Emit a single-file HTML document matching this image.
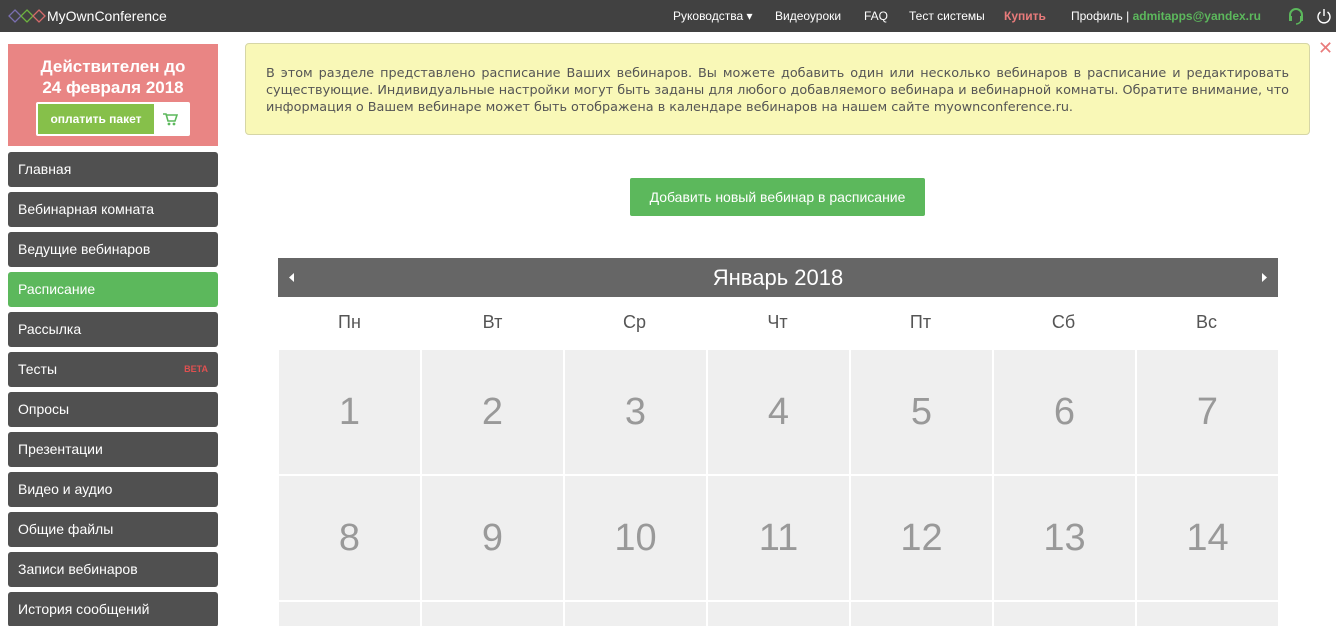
<!DOCTYPE html>
<html style="width:1336px;height:626px;overflow:hidden"><head><meta charset="utf-8"><style>
*{box-sizing:border-box;margin:0;padding:0}
body{width:1336px;height:626px;overflow:hidden;background:#fff;font-family:"Liberation Sans",sans-serif;position:relative}
.top{position:absolute;left:0;top:0;width:1336px;height:32px;background:#414141;color:#fff}
.logo{position:absolute;left:47px;top:8px;font-size:14px;color:#fff}
.nav{position:absolute;top:9px;font-size:12px;color:#fff;white-space:nowrap}
.pink{position:absolute;left:8px;top:44px;width:210px;height:102px;background:#e98584;text-align:center;color:#fff;font-family:"Liberation Sans",sans-serif;font-weight:bold;font-size:17px;line-height:21px;padding-top:12px}
.paybox{position:absolute;left:28px;top:58px;width:154px;height:34px;background:#fff;border-radius:2px}
.paybtn{position:absolute;left:2px;top:2px;width:116px;height:30px;background:#86c04a;color:#fff;font-family:"Liberation Sans",sans-serif;font-size:12px;line-height:30px}
.m{position:absolute;left:8px;width:210px;height:35px;background:#505050;border-radius:3px;color:#fff;font-size:14px;line-height:35px;padding-left:10px}
.m.act{background:#5cb85c}
.note{position:absolute;left:245px;top:43px;width:1065px;height:92px;background:#f9f8b7;border:1px solid #d6d6a6;border-radius:4px;padding:21px 20px 0 20px;font-family:"DejaVu Sans",sans-serif;font-size:12.8px;line-height:17px;color:#555;text-align:justify}
.btn{position:absolute;left:630px;top:178px;width:295px;height:38px;background:#5cb85c;color:#fff;font-size:14px;text-align:center;line-height:38px;border-radius:2px}
.calh{position:absolute;left:278px;top:258px;width:1000px;height:39px;background:#666;color:#fff;text-align:center;font-size:22px;line-height:39px}
.dn{position:absolute;top:312px;width:143px;text-align:center;font-size:18px;color:#555}
.c{position:absolute;width:141px;height:124px;background:#efefef;color:#999;font-size:38px;text-align:center;line-height:124px}
</style></head><body>
<div class="top">
<svg style="position:absolute;left:8px;top:8px" width="38" height="16"><g fill="none" stroke-width="1.3"><path d="M7 2 L13 8 L7 14 L1 8Z" stroke="#7a6fb0"/><path d="M19 2 L25 8 L19 14 L13 8Z" stroke="#6db33f"/><path d="M31 2 L37 8 L31 14 L25 8Z" stroke="#d46a6a"/></g></svg>
<div class="logo">MyOwnConference</div>
<div class="nav" style="left:673px">Руководства ▾</div>
<div class="nav" style="left:775px">Видеоуроки</div>
<div class="nav" style="left:864px">FAQ</div>
<div class="nav" style="left:909px">Тест системы</div>
<div class="nav" style="left:1004px;color:#e97b7b;font-weight:bold">Купить</div>
<div class="nav" style="left:1071px">Профиль | <b style="color:#5cb85c">admitapps@yandex.ru</b></div>
<svg style="position:absolute;left:1287px;top:7px" width="18" height="18"><path d="M3 11 V8 a6 6 0 0 1 12 0 V11" fill="none" stroke="#5cb85c" stroke-width="2"/><rect x="2" y="9" width="3" height="5" fill="#5cb85c"/><rect x="13" y="9" width="3" height="5" fill="#5cb85c"/><path d="M14 14 Q12 17 9 17" fill="none" stroke="#5cb85c" stroke-width="1.5"/></svg>
<svg style="position:absolute;left:1316px;top:7px" width="16" height="18"><path d="M4.5 5 A6 6 0 1 0 11.5 5" fill="none" stroke="#fff" stroke-width="1.4"/><path d="M8 2 V9" stroke="#fff" stroke-width="1.4"/></svg>
</div>
<div class="pink">Действителен до<br>24 февраля 2018
<div class="paybox"><div class="paybtn"><b>оплатить пакет</b></div>
<svg style="position:absolute;left:126px;top:10px" width="16" height="14"><path d="M1 2 H4 L6 9 H13 L15 3 H5" fill="none" stroke="#5cb85c" stroke-width="1.6"/><circle cx="7" cy="12" r="1.4" fill="#5cb85c"/><circle cx="12" cy="12" r="1.4" fill="#5cb85c"/></svg></div></div>
<div class="m" style="top:152px">Главная</div>
<div class="m" style="top:192px">Вебинарная комната</div>
<div class="m" style="top:232px">Ведущие вебинаров</div>
<div class="m act" style="top:272px">Расписание</div>
<div class="m" style="top:312px">Рассылка</div>
<div class="m" style="top:352px">Тесты<span style="position:absolute;right:10px;color:#e05050;font-size:9px;font-weight:bold">BETA</span></div>
<div class="m" style="top:392px">Опросы</div>
<div class="m" style="top:432px">Презентации</div>
<div class="m" style="top:472px">Видео и аудио</div>
<div class="m" style="top:512px">Общие файлы</div>
<div class="m" style="top:552px">Записи вебинаров</div>
<div class="m" style="top:592px">История сообщений</div>
<div class="note">В этом разделе представлено расписание Ваших вебинаров. Вы можете добавить один или несколько вебинаров в расписание и редактировать существующие. Индивидуальные настройки могут быть заданы для любого добавляемого вебинара и вебинарной комнаты. Обратите внимание, что информация о Вашем вебинаре может быть отображена в календаре вебинаров на нашем сайте myownconference.ru.</div>
<div style="position:absolute;left:1318px;top:38px;color:#e97b7b;font-size:18px">✕</div>
<div class="btn">Добавить новый вебинар в расписание</div>
<div class="calh">Январь 2018
<svg style="position:absolute;left:10px;top:14px" width="8" height="11"><path d="M6 1 L1 5.5 L6 10Z" fill="#fff"/></svg>
<svg style="position:absolute;right:10px;top:14px" width="8" height="11"><path d="M2 1 L7 5.5 L2 10Z" fill="#fff"/></svg></div>
<div class="dn" style="left:278px">Пн</div><div class="dn" style="left:421px">Вт</div><div class="dn" style="left:563px">Ср</div><div class="dn" style="left:706px">Чт</div><div class="dn" style="left:849px">Пт</div><div class="dn" style="left:992px">Сб</div><div class="dn" style="left:1135px">Вс</div>
<div class="c" style="left:279px;top:350px">1</div><div class="c" style="left:422px;top:350px">2</div><div class="c" style="left:565px;top:350px">3</div><div class="c" style="left:708px;top:350px">4</div><div class="c" style="left:851px;top:350px">5</div><div class="c" style="left:994px;top:350px">6</div><div class="c" style="left:1137px;top:350px">7</div>
<div class="c" style="left:279px;top:476px">8</div><div class="c" style="left:422px;top:476px">9</div><div class="c" style="left:565px;top:476px">10</div><div class="c" style="left:708px;top:476px">11</div><div class="c" style="left:851px;top:476px">12</div><div class="c" style="left:994px;top:476px">13</div><div class="c" style="left:1137px;top:476px">14</div>
<div class="c" style="left:279px;top:602px;height:24px"></div><div class="c" style="left:422px;top:602px;height:24px"></div><div class="c" style="left:565px;top:602px;height:24px"></div><div class="c" style="left:708px;top:602px;height:24px"></div><div class="c" style="left:851px;top:602px;height:24px"></div><div class="c" style="left:994px;top:602px;height:24px"></div><div class="c" style="left:1137px;top:602px;height:24px"></div>
</body></html>
